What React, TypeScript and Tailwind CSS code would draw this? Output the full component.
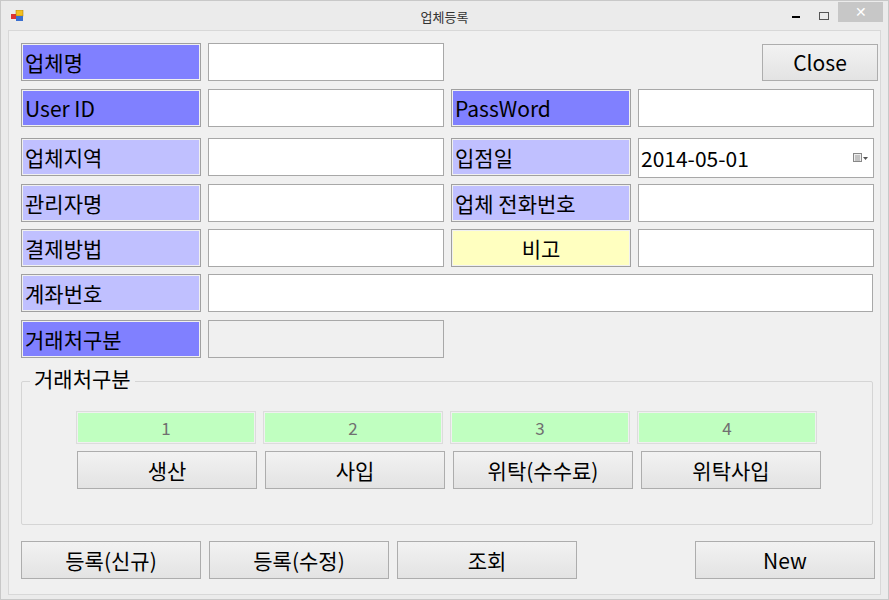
import React from "react";

const F = { fontFamily: '"Noto Sans CJK KR", "Noto Sans", sans-serif' };

function Label({ text, tone, center }: { text: string; tone: "dark" | "light" | "yellow"; center?: boolean }) {
  const bg = tone === "dark" ? "bg-[#8080ff]" : tone === "light" ? "bg-[#c0c0ff]" : "bg-[#ffffc0]";
  return (
    <div className={`w-[180px] h-[38px] border border-[#a0a0a0] p-[1px] ${"bg-[#f0f0f0]"}`}>
      <div className={`w-full h-full ${bg} flex items-center ${center ? "justify-center" : "pl-[2px]"} text-[21px] text-black leading-none`}>{text}</div>
    </div>
  );
}

function Input({ w = "w-[236px]", children, gray }: { w?: string; children?: React.ReactNode; gray?: boolean }) {
  return (
    <div className={`${w} h-[38px] border border-[#a8a8a8] ${gray ? "bg-[#f0f0f0]" : "bg-white"} flex items-center text-[21px] leading-none`}>{children}</div>
  );
}

function Btn({ text, w = "w-[180px]", h = "h-[38px]" }: { text: string; w?: string; h?: string }) {
  return (
    <div className={`${w} ${h} border border-[#adadad] bg-gradient-to-b from-[#f2f2f2] to-[#e3e3e3] flex items-center justify-center text-[21px] leading-none text-black`}>{text}</div>
  );
}

export default function App() {
  return (
    <div style={F} className="w-[889px] h-[600px] bg-[#ebebeb] border border-[#c8c8c8] flex flex-col">
      <div className="h-[29px] flex items-center relative">
        <svg className="ml-[10px]" width="14" height="12" viewBox="0 0 14 12">
          <rect x="0" y="4" width="5" height="5" fill="#d33" />
          <rect x="5" y="0" width="7" height="6" fill="#f3c020" stroke="#a07000" strokeWidth="0.5" />
          <rect x="5" y="6" width="7" height="5" fill="#3a6fd0" />
        </svg>
        <div className="absolute left-0 right-0 text-center text-[13px] text-[#333] top-[6px]">업체등록</div>
        <div className="ml-auto flex items-center h-full">
          <div className="w-[28px] flex justify-center"><div className="w-[8px] h-[2px] bg-black mt-[3px]" /></div>
          <div className="w-[28px] flex justify-center"><div className="w-[10px] h-[8px] border border-[#555]" /></div>
          <div className="w-[45px] h-[20px] bg-[#c7c7c7] text-white flex items-center justify-center text-[14px] mb-[8px] mr-[5px]">✕</div>
        </div>
      </div>
      <div className="mx-[7px] mb-[4px] flex-1 bg-[#f0f0f0] border border-[#d8d8d8] pl-[12px] pt-[12px] flex flex-col">
        <div className="flex gap-[7px] h-[38px]">
          <Label text="업체명" tone="dark" /><Input />
          <div className="ml-[311px] mt-[1px]"><Btn text="Close" w="w-[116px]" h="h-[37px]" /></div>
        </div>
        <div className="flex gap-[7px] mt-[8px]">
          <Label text="User ID" tone="dark" /><Input /><Label text="PassWord" tone="dark" /><Input />
        </div>
        <div className="flex gap-[7px] mt-[11px]">
          <Label text="업체지역" tone="light" /><Input /><Label text="입점일" tone="light" />
          <div className="w-[236px] h-[40px] border border-[#a8a8a8] bg-white flex items-center text-[21px] leading-none pl-[2px]">
            2014-05-01
            <svg className="ml-auto mr-[4px]" width="16" height="10" viewBox="0 0 16 10"><rect x="0.5" y="0.5" width="8" height="8" fill="#eee" stroke="#888" /><path d="M2 3h5M2 5h5M2 7h5" stroke="#999" /><path d="M10 4h5l-2.5 3z" fill="#555" /></svg>
          </div>
        </div>
        <div className="flex gap-[7px] mt-[6px]">
          <Label text="관리자명" tone="light" /><Input /><Label text="업체 전화번호" tone="light" /><Input />
        </div>
        <div className="flex gap-[7px] mt-[7px]">
          <Label text="결제방법" tone="light" /><Input /><Label text="비고" tone="yellow" center /><Input />
        </div>
        <div className="flex gap-[7px] mt-[7px]">
          <Label text="계좌번호" tone="light" /><Input w="w-[665px]" />
        </div>
        <div className="flex gap-[7px] mt-[8px]">
          <Label text="거래처구분" tone="dark" /><Input gray />
        </div>
        <div className="relative mt-[23px] w-[852px] h-[144px] border border-[#d5d5d5] rounded-[2px]">
          <div className="absolute left-[8px] top-[-14px] bg-[#f0f0f0] px-[4px] text-[21px] leading-none">거래처구분</div>
          <div className="ml-[54px] mt-[29px] flex gap-[7px]">
            {["1", "2", "3", "4"].map((n) => (
              <div key={n} className="w-[180px] h-[33px] border border-[#dcdcdc] p-[1px]">
                <div className="w-full h-full bg-[#c0ffc0] flex items-center justify-center text-[17px] text-[#707070]">{n}</div>
              </div>
            ))}
          </div>
          <div className="ml-[55px] mt-[7px] flex gap-[8px]">
            <Btn text="생산" /><Btn text="사입" /><Btn text="위탁(수수료)" /><Btn text="위탁사입" />
          </div>
        </div>
        <div className="flex gap-[8px] mt-[16px]">
          <Btn text="등록(신규)" /><Btn text="등록(수정)" /><Btn text="조회" />
          <div className="ml-[110px]"><Btn text="New" /></div>
        </div>
      </div>
    </div>
  );
}
